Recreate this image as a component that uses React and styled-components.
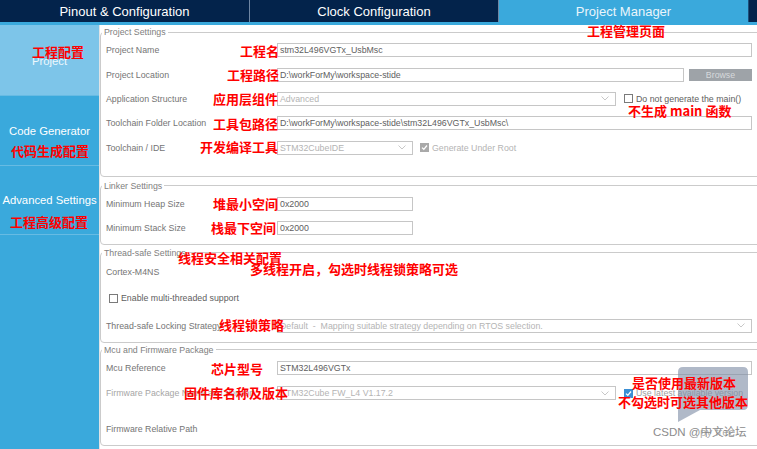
import React from 'react';
import styled, { createGlobalStyle } from 'styled-components';

const Global = createGlobalStyle`
  html, body { margin: 0; padding: 0; background: #fff; }
  body { font-family: "Liberation Sans", Arial, sans-serif; }
  * { box-sizing: border-box; }
`;

const Screen = styled.div`
  position: relative;
  width: 757px;
  height: 449px;
  overflow: hidden;
  display: flex;
  flex-direction: column;
  background: #fff;
`;

const TabBar = styled.div`
  display: flex;
  height: 22px;
  flex-shrink: 0;
  background: #03234b;
`;

const Tab = styled.div`
  width: ${p => p.w}px;
  height: 22px;
  display: flex;
  align-items: center;
  justify-content: center;
  font-size: 13px;
  padding-top: 1px;
  color: ${p => (p.active ? '#eaf5fb' : '#ffffff')};
  background: ${p => (p.active ? '#3aa9dc' : 'transparent')};
  border-right: 1px solid ${p => (p.active ? '#1d4f7a' : '#6f86a3')};
`;

const Strip = styled.div`
  height: 3px;
  flex-shrink: 0;
  background: #3aa9dc;
`;

const Main = styled.div`
  flex: 1;
  display: flex;
  min-height: 0;
`;

const Sidebar = styled.div`
  width: 100px;
  flex-shrink: 0;
  background: #3aa9dc;
  border-right: 1px solid #dfe3e6;
  display: flex;
  flex-direction: column;
`;

const NavItem = styled.div`
  height: ${p => p.h}px;
  display: flex;
  align-items: center;
  justify-content: center;
  padding-top: ${p => (p.active ? 2 : 0)}px;
  font-size: 11.3px;
  color: ${p => (p.active ? '#eef8fd' : '#ffffff')};
  background: ${p => (p.active ? '#7dc5e9' : 'transparent')};
  border-bottom: 1px solid #67bbe3;
  white-space: nowrap;
`;

const Content = styled.div`
  flex: 1;
  padding: 2px 0 0 0;
  display: flex;
  flex-direction: column;
  min-width: 0;
`;

const Group = styled.fieldset`
  margin: 0 -6px ${p => p.mb}px 0;
  border: 1px solid #cbcbcb;
  border-radius: 4px;
  padding: 1px 10px ${p => p.pb}px 1px;
  min-width: 0;
`;

const Legend = styled.legend`
  font-size: 8.8px;
  line-height: 10px;
  color: #808080;
  padding: 0 2px;
`;

const Row = styled.div`
  height: ${p => p.h}px;
  display: grid;
  grid-template-columns: 171px 1fr;
  align-items: center;
  padding-left: 4px;
`;

const Spacer = styled.div`
  height: ${p => p.h}px;
`;

const Label = styled.div`
  font-size: 8.8px;
  color: ${p => (p.muted ? '#a6a6a6' : '#747474')};
  white-space: nowrap;
`;

const Field = styled.div`
  display: flex;
  align-items: center;
  min-width: 0;
`;

const Input = styled.div`
  height: 14px;
  ${p => (p.w ? `width: ${p.w}px; flex-shrink: 0;` : 'flex: 1;')}
  border: 1px solid #c6c6c6;
  background: #fff;
  font-size: 8.8px;
  color: ${p => (p.disabled ? '#b4b4b4' : '#606060')};
  padding: 0 6px 0 2px;
  display: flex;
  align-items: center;
  justify-content: space-between;
  white-space: nowrap;
  overflow: hidden;
  min-width: 0;
`;

const Browse = styled.div`
  width: 63px;
  height: 12px;
  margin-left: 5px;
  flex-shrink: 0;
  background: #9ea3a8;
  color: #d6d9dc;
  font-size: 8.8px;
  display: flex;
  align-items: center;
  justify-content: center;
`;

const CheckWrap = styled.div`
  display: flex;
  align-items: center;
  gap: 3px;
  margin-left: ${p => p.ml}px;
  font-size: 8.8px;
  color: ${p => p.color};
  white-space: nowrap;
`;

const Box = styled.div`
  width: 9px;
  height: 9px;
  flex-shrink: 0;
  border: 1px solid ${p => (p.variant === 'off' ? '#7a7a7a' : p.variant === 'blue' ? '#3b8fd4' : '#a9a9a9')};
  background: ${p => (p.variant === 'off' ? '#fff' : p.variant === 'blue' ? '#3b8fd4' : '#a9a9a9')};
  display: flex;
  align-items: center;
  justify-content: center;
`;

const Chevron = () => (
  <svg width="8" height="5" viewBox="0 0 8 5">
    <path d="M0.5 0.5 L4 4 L7.5 0.5" fill="none" stroke="#c2c2c2" strokeWidth="0.9" />
  </svg>
);

const Check = ({ variant, label, ml, color }) => (
  <CheckWrap ml={ml} color={color}>
    <Box variant={variant}>
      {variant !== 'off' && (
        <svg width="7" height="7" viewBox="0 0 7 7">
          <path d="M1 3.6 L2.8 5.3 L6 1.5" fill="none" stroke="#fff" strokeWidth="1.3" />
        </svg>
      )}
    </Box>
    <span>{label}</span>
  </CheckWrap>
);

const Note = styled.span`
  position: absolute;
  left: ${p => p.x}px;
  top: ${p => p.y}px;
  font-family: "Noto Sans CJK SC", "Liberation Sans", sans-serif;
  font-weight: 700;
  font-size: 13px;
  line-height: 13px;
  color: #ff0000;
  white-space: nowrap;
`;

const Mark = styled.svg`
  position: absolute;
  left: 670px;
  top: 360px;
`;

const MarkText = styled.span`
  position: absolute;
  left: ${p => p.x}px;
  top: 426px;
  font-family: "Liberation Sans", "Noto Sans CJK SC", sans-serif;
  font-size: 11.5px;
  line-height: 13px;
  color: ${p => p.c};
  white-space: nowrap;
`;

const notes = [
  [32, 44.5, '工程配置'],
  [587, 23.5, '工程管理页面'],
  [240, 43.5, '工程名'],
  [227, 67.5, '工程路径'],
  [213, 92, '应用层组件'],
  [628, 104, '不生成 main 函数'],
  [213, 116.5, '工具包路径'],
  [200, 140, '开发编译工具'],
  [11, 143.5, '代码生成配置'],
  [213, 197, '堆最小空间'],
  [10, 215, '工程高级配置'],
  [211, 221, '栈最下空间'],
  [178, 251, '线程安全相关配置'],
  [250, 262, '多线程开启，勾选时线程锁策略可选'],
  [219, 317.5, '线程锁策略'],
  [211, 361.5, '芯片型号'],
  [184, 385.5, '固件库名称及版本'],
  [632, 375.5, '是否使用最新版本'],
  [618, 394.5, '不勾选时可选其他版本'],
];

export default function App() {
  return (
    <>
      <Global />
      <Screen>
        <TabBar>
          <Tab w={250}>Pinout &amp; Configuration</Tab>
          <Tab w={249}>Clock Configuration</Tab>
          <Tab w={250} active>Project Manager</Tab>
        </TabBar>
        <Strip />
        <Main>
          <Sidebar>
            <NavItem h={71} active>Project</NavItem>
            <NavItem h={70}>Code Generator</NavItem>
            <NavItem h={69}>Advanced Settings</NavItem>
          </Sidebar>
          <Content>
            <Group mb={4} pb={16}>
              <Legend>Project Settings</Legend>
              <Row h={24.4}>
                <Label>Project Name</Label>
                <Field><Input>stm32L496VGTx_UsbMsc</Input></Field>
              </Row>
              <Row h={24.4}>
                <Label>Project Location</Label>
                <Field>
                  <Input>D:\workForMy\workspace-stide</Input>
                  <Browse>Browse</Browse>
                </Field>
              </Row>
              <Row h={24.4}>
                <Label>Application Structure</Label>
                <Field>
                  <Input w={339} disabled>Advanced<Chevron /></Input>
                  <Check variant="off" ml={8} color="#606060" label="Do not generate the main()" />
                </Field>
              </Row>
              <Row h={24.4}>
                <Label>Toolchain Folder Location</Label>
                <Field><Input>D:\workForMy\workspace-stide\stm32L496VGTx_UsbMsc\</Input></Field>
              </Row>
              <Row h={24.4}>
                <Label>Toolchain / IDE</Label>
                <Field>
                  <Input w={136} disabled>STM32CubeIDE<Chevron /></Input>
                  <Check variant="grey" ml={7} color="#b4b4b4" label="Generate Under Root" />
                </Field>
              </Row>
            </Group>

            <Group mb={3} pb={4}>
              <Legend>Linker Settings</Legend>
              <Row h={24}>
                <Label>Minimum Heap Size</Label>
                <Field><Input w={136}>0x2000</Input></Field>
              </Row>
              <Row h={24}>
                <Label>Minimum Stack Size</Label>
                <Field><Input w={136}>0x2000</Input></Field>
              </Row>
            </Group>

            <Group mb={2} pb={2}>
              <Legend>Thread-safe Settings</Legend>
              <Row h={26}>
                <Label>Cortex-M4NS</Label>
              </Row>
              <Row h={27}>
                <Check variant="off" ml={3} color="#606060" label="Enable multi-threaded support" />
              </Row>
              <Row h={28}>
                <Label>Thread-safe Locking Strategy</Label>
                <Field>
                  <Input disabled>Default&nbsp;&nbsp;-&nbsp;&nbsp;Mapping suitable strategy depending on RTOS selection.<Chevron /></Input>
                </Field>
              </Row>
            </Group>

            <Group mb={0} pb={4}>
              <Legend>Mcu and Firmware Package</Legend>
              <Row h={25}>
                <Label>Mcu Reference</Label>
                <Field><Input>STM32L496VGTx</Input></Field>
              </Row>
              <Row h={25}>
                <Label muted>Firmware Package Name and Version</Label>
                <Field>
                  <Input w={339} disabled>STM32Cube FW_L4 V1.17.2<Chevron /></Input>
                  <Check variant="blue" ml={8} color="#a0a0a0" label="Use latest available version" />
                </Field>
              </Row>
              <Spacer h={11} />
              <Row h={24}>
                <Label>Firmware Relative Path</Label>
              </Row>
            </Group>
          </Content>
        </Main>

        <Mark width="87" height="70" viewBox="0 0 87 70">
          <path
            d="M8 12 Q8 7 13 7 L73 7 Q78 7 78 12 L78 45 Q78 50 73 50 L30 50 L8 62 Z"
            fill="#7f8ea6"
            fillOpacity="0.62"
          />
        </Mark>
        <MarkText x={653} c="#8c8c8c">CSDN @中文论坛</MarkText>
        <MarkText x={700} c="rgba(140,140,140,0.7)">py free</MarkText>

        {notes.map(([x, y, t]) => (
          <Note key={t} x={x} y={y}>{t}</Note>
        ))}
      </Screen>
    </>
  );
}
